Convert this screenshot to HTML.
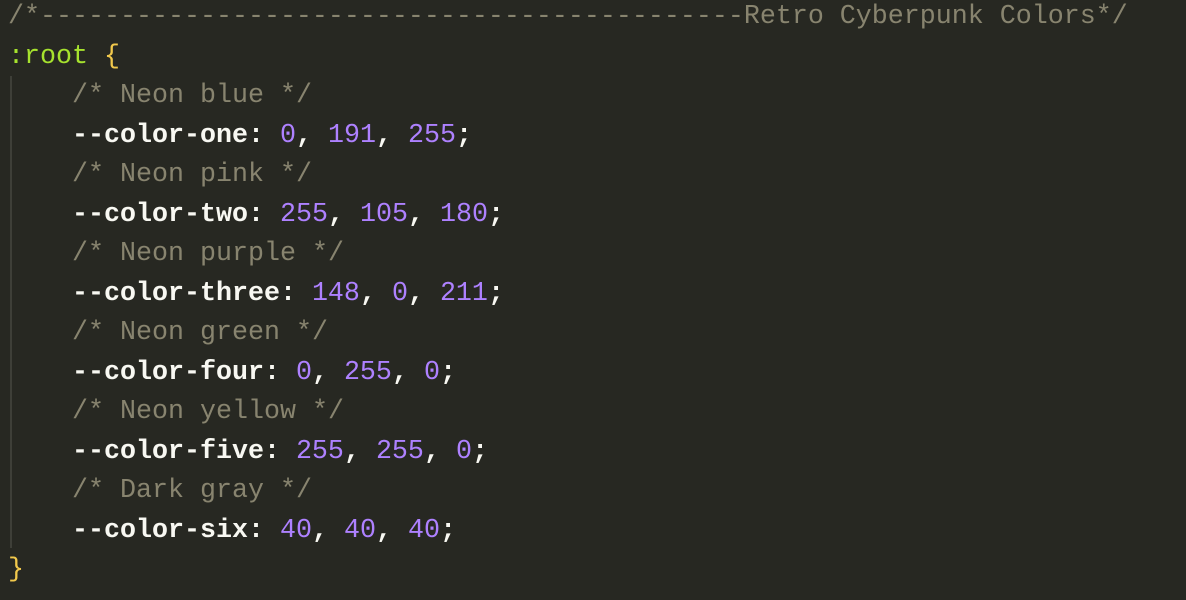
<!DOCTYPE html>
<html><head><style>
html,body{margin:0;padding:0;background:#272822;width:1186px;height:600px;overflow:hidden}
pre{margin:0;position:absolute;left:8px;top:-2px;font-family:"Liberation Mono",monospace;font-size:26.67px;line-height:39.5px;color:#f8f8f2;font-weight:bold}
.c{color:#88846f;font-weight:normal}.g{color:#a6e22e;font-weight:normal}.y{color:#f2c94c;font-weight:normal}.n{color:#ae81ff;font-weight:normal}
.guide{position:absolute;left:10px;top:76px;width:2px;height:472px;background:#3e3f38}
</style></head><body>
<div class="guide"></div>
<pre><span class="c">/*--------------------------------------------Retro Cyberpunk Colors*/</span>
<span class="g">:root</span> <span class="y">{</span>
    <span class="c">/* Neon blue */</span>
    --color-one: <span class="n">0</span>, <span class="n">191</span>, <span class="n">255</span>;
    <span class="c">/* Neon pink */</span>
    --color-two: <span class="n">255</span>, <span class="n">105</span>, <span class="n">180</span>;
    <span class="c">/* Neon purple */</span>
    --color-three: <span class="n">148</span>, <span class="n">0</span>, <span class="n">211</span>;
    <span class="c">/* Neon green */</span>
    --color-four: <span class="n">0</span>, <span class="n">255</span>, <span class="n">0</span>;
    <span class="c">/* Neon yellow */</span>
    --color-five: <span class="n">255</span>, <span class="n">255</span>, <span class="n">0</span>;
    <span class="c">/* Dark gray */</span>
    --color-six: <span class="n">40</span>, <span class="n">40</span>, <span class="n">40</span>;
<span class="y">}</span></pre>
</body></html>
